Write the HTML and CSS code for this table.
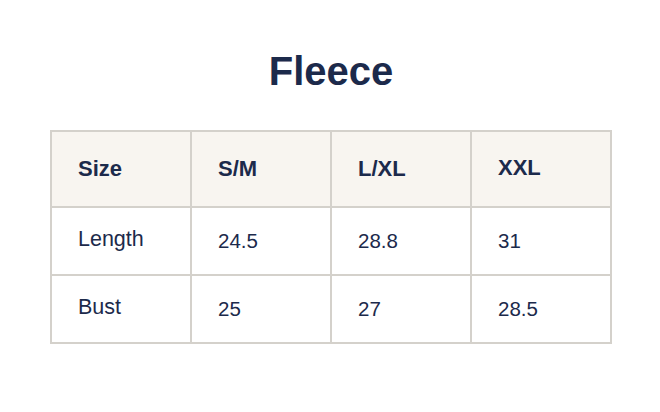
FILE: index.html
```html
<!DOCTYPE html>
<html>
<head>
<meta charset="utf-8">
<link rel="stylesheet" href="styles.css">
</head>
<body>
<main class="page">
  <h1 class="title">Fleece</h1>
  <table class="size-table">
    <thead>
      <tr>
        <th class="first">Size</th>
        <th>S/M</th>
        <th>L/XL</th>
        <th class="xxl">XXL</th>
      </tr>
    </thead>
    <tbody>
      <tr>
        <td class="first">Length</td>
        <td>24.5</td>
        <td>28.8</td>
        <td>31</td>
      </tr>
      <tr>
        <td class="first">Bust</td>
        <td>25</td>
        <td>27</td>
        <td>28.5</td>
      </tr>
    </tbody>
  </table>
</main>
</body>
</html>
```

FILE: styles.css
```css
html, body {
  margin: 0;
  padding: 0;
  background: #ffffff;
}

body {
  font-family: "Liberation Sans", Arial, sans-serif;
  color: #1c2a4b;
}

.page {
  padding: 47px 0 0 50px;
}

.title {
  margin: 0 0 35px 0;
  width: 562px;
  text-align: center;
  font-size: 40px;
  line-height: 48px;
  font-weight: 700;
}

.size-table {
  width: 562px;
  table-layout: fixed;
  border-collapse: separate;
  border-spacing: 0;
  border-top: 2px solid #d4d1cb;
  border-left: 2px solid #d4d1cb;
}

.size-table th,
.size-table td {
  border-right: 2px solid #d4d1cb;
  border-bottom: 2px solid #d4d1cb;
  text-align: left;
  vertical-align: top;
  padding: 0 26px;
}

.size-table th {
  background: #f8f5f0;
  font-size: 22px;
  line-height: 24px;
  font-weight: 700;
  padding-top: 25px;
  padding-bottom: 25px;
}

.size-table th.xxl {
  padding-top: 24px;
  padding-bottom: 26px;
}

.size-table td {
  font-size: 20.5px;
  line-height: 22px;
  font-weight: 400;
  padding-top: 22px;
  padding-bottom: 22px;
}

.size-table td.first {
  font-size: 21.5px;
  padding-top: 20px;
  padding-bottom: 24px;
}
```
